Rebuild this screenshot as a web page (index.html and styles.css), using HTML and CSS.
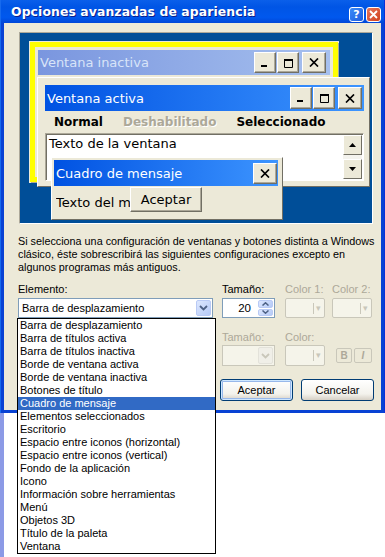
FILE: index.html
```html
<!DOCTYPE html>
<html lang="es">
<head>
    <meta charset="UTF-8">
    <title>Opciones avanzadas de apariencia</title>
    <link rel="stylesheet" href="styles.css">
</head>
<body>
    <div class="dialog">
        <div class="titlebar">
            <span class="title">Opciones avanzadas de apariencia</span>
            <span class="cap-btn help">?</span>
            <span class="cap-btn close">
                <svg width="9" height="9" viewBox="0 0 9 9"><path d="M1 1L8 8M8 1L1 8" stroke="#fff" stroke-width="1.8"/></svg>
            </span>
        </div>

        <div class="dialog-body">
            <!-- Preview of the window elements -->
            <div class="preview">
                <div class="desk">
                    <div class="win inactive">
                        <div class="win-title inactive-title">
                            <span>Ventana inactiva</span>
                            <div class="win-btns">
                                <span class="wbtn"><svg width="10" height="10" viewBox="0 0 10 10"><rect x="1" y="7" width="6" height="2"/></svg></span>
                                <span class="wbtn"><svg width="11" height="10" viewBox="0 0 11 10"><path d="M1 1.5H10M1.5 1V9.5H9.5V1" fill="none" stroke="#000" stroke-width="1"/><rect x="1" y="1" width="9" height="2"/></svg></span>
                                <span class="wbtn gap"><svg width="10" height="9" viewBox="0 0 10 9"><path d="M1 0.5L9 8.5M9 0.5L1 8.5" stroke="#000" stroke-width="1.7"/></svg></span>
                            </div>
                        </div>
                    </div>

                    <div class="win active">
                        <div class="win-title active-title">
                            <span>Ventana activa</span>
                            <div class="win-btns">
                                <span class="wbtn"><svg width="10" height="10" viewBox="0 0 10 10"><rect x="1" y="7" width="6" height="2"/></svg></span>
                                <span class="wbtn"><svg width="11" height="10" viewBox="0 0 11 10"><path d="M1 1.5H10M1.5 1V9.5H9.5V1" fill="none" stroke="#000" stroke-width="1"/><rect x="1" y="1" width="9" height="2"/></svg></span>
                                <span class="wbtn gap"><svg width="10" height="9" viewBox="0 0 10 9"><path d="M1 0.5L9 8.5M9 0.5L1 8.5" stroke="#000" stroke-width="1.7"/></svg></span>
                            </div>
                        </div>
                        <div class="menu-row">
                            <span>Normal</span>
                            <span class="disabled">Deshabilitado</span>
                            <span>Seleccionado</span>
                        </div>
                        <div class="win-text">
                            <span>Texto de la ventana</span>
                            <div class="scroll">
                                <span class="sbtn"><svg width="7" height="4" viewBox="0 0 7 4"><path d="M0 4L3.5 0L7 4Z"/></svg></span>
                                <span class="sbtn"><svg width="7" height="4" viewBox="0 0 7 4"><path d="M0 0L3.5 4L7 0Z"/></svg></span>
                            </div>
                        </div>
                    </div>

                    <div class="msgbox">
                        <div class="win-title active-title msg-title">
                            <span>Cuadro de mensaje</span>
                            <span class="wbtn msg-close"><svg width="10" height="9" viewBox="0 0 10 9"><path d="M1 0.5L9 8.5M9 0.5L1 8.5" stroke="#000" stroke-width="1.7"/></svg></span>
                        </div>
                        <div class="msg-body">
                            <span class="msg-text">Texto del mensaje</span>
                            <span class="msg-ok">Aceptar</span>
                        </div>
                    </div>
                </div>
            </div>

            <p class="note">Si selecciona una configuración de ventanas y botones distinta a Windows<br>clásico, éste sobrescribirá las siguientes configuraciones excepto en<br>algunos programas más antiguos.</p>

            <div class="fields">
                <label>Elemento:</label>
                <label>Tamaño:</label>
                <label class="off">Color 1:</label>
                <label class="off">Color 2:</label>

                <div class="combo wide">
                    <span>Barra de desplazamiento</span>
                    <span class="combo-arrow"><svg width="9" height="6" viewBox="0 0 9 6"><path d="M1 1L4.5 4.5L8 1" fill="none" stroke="#4D6185" stroke-width="1.8"/></svg></span>
                </div>
                <div class="spin">
                    <span>20</span>
                    <div class="spin-btns">
                        <span><svg width="7" height="4" viewBox="0 0 7 4"><path d="M0.5 3.5L3.5 0.8L6.5 3.5" fill="none" stroke="#4D6185" stroke-width="1.5"/></svg></span>
                        <span><svg width="7" height="4" viewBox="0 0 7 4"><path d="M0.5 0.5L3.5 3.2L6.5 0.5" fill="none" stroke="#4D6185" stroke-width="1.5"/></svg></span>
                    </div>
                </div>
                <div class="colorbox"><span class="cb-arrow">▾</span></div>
                <div class="colorbox"><span class="cb-arrow">▾</span></div>
            </div>

            <div class="fields second">
                <span></span>
                <label class="off">Tamaño:</label>
                <label class="off">Color:</label>
                <span></span>

                <span></span>
                <div class="combo off-combo">
                    <span></span>
                    <span class="combo-arrow grey"><svg width="9" height="6" viewBox="0 0 9 6"><path d="M1 1L4.5 4.5L8 1" fill="none" stroke="#C9C7BA" stroke-width="1.8"/></svg></span>
                </div>
                <div class="colorbox tall"><span class="cb-arrow">▾</span></div>
                <div class="style-btns">
                    <span class="sb bold">B</span>
                    <span class="sb ital">I</span>
                </div>
            </div>

            <div class="actions">
                <button class="xp-btn default">Aceptar</button>
                <button class="xp-btn">Cancelar</button>
            </div>

            <!-- open drop-down of the Elemento combo -->
            <ul class="listbox">
                <li>Barra de desplazamiento</li>
                <li>Barra de títulos activa</li>
                <li>Barra de títulos inactiva</li>
                <li>Borde de ventana activa</li>
                <li>Borde de ventana inactiva</li>
                <li>Botones de título</li>
                <li class="sel">Cuadro de mensaje</li>
                <li>Elementos seleccionados</li>
                <li>Escritorio</li>
                <li>Espacio entre iconos (horizontal)</li>
                <li>Espacio entre iconos (vertical)</li>
                <li>Fondo de la aplicación</li>
                <li>Icono</li>
                <li>Información sobre herramientas</li>
                <li>Menú</li>
                <li>Objetos 3D</li>
                <li>Título de la paleta</li>
                <li>Ventana</li>
            </ul>
        </div>
    </div>
    <div class="edge"></div>
</body>
</html>
```

FILE: styles.css
```css
/* Page */
body {
    margin: 0;
    width: 385px;
    height: 557px;
    background: #fff;
    font-family: "Liberation Sans", Arial, sans-serif;
    font-size: 11px;
    overflow: hidden;
}

/* Dialog frame */
.dialog {
    width: 385px;
    height: 413px;
    box-sizing: border-box;
    padding: 0 3px 3px;
    background: #0842D4;
    border-left: 1px solid #166AEE;
    border-right: 1px solid #0831D9;
    display: flex;
    flex-direction: column;
}
.titlebar {
    flex-shrink: 0;
    height: 23px;
    margin: 0 -3px;
    padding: 0 3px 0 10px;
    display: flex;
    align-items: center;
    background: linear-gradient(#0A5FEA 0%, #0055E5 30%, #0058EE 75%, #0047D8 100%);
}
.title {
    flex: 1;
    color: #fff;
    font-family: "DejaVu Sans", sans-serif;
    font-weight: bold;
    font-size: 12.4px;
    letter-spacing: 0.1px;
    text-shadow: 1px 1px #0A1F8C;
}
.cap-btn {
    width: 13px;
    height: 13px;
    margin-top: 6px;
    margin-left: 2px;
    border: 1px solid #fff;
    border-radius: 3px;
    display: flex;
    align-items: center;
    justify-content: center;
    color: #fff;
    font-family: "DejaVu Sans", sans-serif;
    font-weight: bold;
    font-size: 11px;
}
.cap-btn.help {
    background: linear-gradient(135deg, #3C8CF8, #1C5CE0);
}
.cap-btn.close {
    background: linear-gradient(135deg, #E8765A, #D0421E);
}

.dialog-body {
    position: relative;
    flex: 1;
    min-height: 0;
    background: #ECE9D8;
    padding: 9px 0 0 13px;
}

/* Preview canvas */
.preview {
    width: 354px;
    height: 192px;
    margin-left: 2px;
    box-sizing: border-box;
    border: 1px solid;
    border-color: #ACA899 #fff #fff #ACA899;
}
.desk {
    position: relative;
    height: 100%;
    background: #004E98;
    overflow: hidden;
    font-family: "DejaVu Sans", sans-serif;
    font-size: 13px;
}
.win {
    position: absolute;
    box-sizing: border-box;
    background: #ECE9D8;
}
.inactive {
    left: 10px;
    top: 9px;
    width: 308px;
    height: 140px;
    border: 5px solid #FFFF00;
    padding: 3px;
    box-shadow: 1px 1px 0 #ACA899, 0 0 0 1px #ECE9D8;
}
.active {
    left: 17px;
    top: 44px;
    width: 333px;
    height: 110px;
    padding: 7px 5px 0 7px;
    border: 1px solid;
    border-color: #fff #716F64 #716F64 #fff;
}
.win-title {
    height: 25px;
    display: flex;
    align-items: center;
    padding-left: 2px;
    color: #fff;
}
.win-title > span:first-child {
    flex: 1;
}
.inactive-title {
    background: linear-gradient(90deg, #7A96DF, #A6C0EE);
    color: #D8E4F8;
}
.active-title {
    height: 26px;
    background: linear-gradient(90deg, #0052E2, #3D95FF);
}
.win-btns {
    display: flex;
    gap: 1px;
    margin-right: 4px;
}
.active .win-btns {
    margin-right: 2px;
}
.wbtn {
    width: 22px;
    height: 21px;
    box-sizing: border-box;
    background: #ECE9D8;
    border: 1px solid;
    border-color: #fff #716F64 #716F64 #fff;
    box-shadow: inset -1px -1px #ACA899;
    display: flex;
    align-items: center;
    justify-content: center;
}
.active .wbtn {
    height: 22px;
}
.wbtn.gap {
    margin-left: 2px;
    width: 24px;
}
.menu-row {
    height: 22px;
    display: flex;
    align-items: center;
    gap: 20px;
    padding-left: 9px;
    font-weight: bold;
    font-size: 12px;
    color: #000;
}
.menu-row .disabled {
    color: #ACA899;
    text-shadow: 1px 1px #fff;
}
.win-text {
    height: 48px;
    box-sizing: border-box;
    background: #fff;
    border: 1px solid;
    border-color: #ACA899 #fff #fff #ACA899;
    box-shadow: inset 1px 1px #716F64;
    display: flex;
    padding: 2px 1px 1px 3px;
}
.win-text > span {
    flex: 1;
    line-height: 15px;
}
.scroll {
    width: 19px;
    display: flex;
    flex-direction: column;
    justify-content: space-between;
    background: #F4F3EE;
    margin-top: -1px;
}
.sbtn {
    height: 20px;
    box-sizing: border-box;
    background: #ECE9D8;
    border: 1px solid;
    border-color: #fff #716F64 #716F64 #fff;
    display: flex;
    align-items: center;
    justify-content: center;
}

/* Message box */
.msgbox {
    position: absolute;
    left: 31px;
    top: 124px;
    width: 232px;
    height: 63px;
    box-sizing: border-box;
    background: #ECE9D8;
    padding: 2px 4px 0 2px;
    border: 1px solid;
    border-color: #fff #716F64 #716F64 #fff;
}
.msg-title {
    padding-right: 1px;
}
.msg-close {
    width: 24px;
    height: 21px;
}
.msg-body {
    height: 32px;
    display: flex;
    align-items: center;
    padding-left: 2px;
}
.msg-text {
    width: 74px;
    overflow: hidden;
    white-space: nowrap;
}
.msg-ok {
    align-self: flex-start;
    margin-top: 1px;
    width: 72px;
    height: 25px;
    box-sizing: border-box;
    background: #ECE9D8;
    border: 1px solid;
    border-color: #fff #716F64 #716F64 #fff;
    box-shadow: inset -1px -1px #ACA899;
    display: flex;
    align-items: center;
    justify-content: center;
}

/* Explanation */
.note {
    margin: 11px 0 0 1px;
    line-height: 13px;
    font-size: 10.8px;
    white-space: nowrap;
    color: #000;
}

/* Element / size / colour fields */
.fields {
    display: grid;
    grid-template-columns: 204px 63px 47px 40px;
    grid-template-rows: 13px 20px;
    row-gap: 2px;
    margin-top: 9px;
    margin-left: 1px;
}
.fields.second {
    margin-top: 13px;
    grid-template-rows: 13px 21px;
    row-gap: 1px;
}
.fields label {
    line-height: 13px;
}
.fields .off {
    color: #ACA899;
}
.combo {
    box-sizing: border-box;
    border: 1px solid #7F9DB9;
    background: #fff;
    display: flex;
    align-items: center;
    padding: 0 1px 0 3px;
}
.combo.wide {
    width: 195px;
}
.combo > span:first-child {
    flex: 1;
}
.combo-arrow {
    width: 15px;
    height: 16px;
    box-sizing: border-box;
    border: 1px solid #B9CAF5;
    border-radius: 2px;
    background: linear-gradient(135deg, #DDE7FE, #B5CAF7);
    display: flex;
    align-items: center;
    justify-content: center;
}
.combo-arrow.grey {
    background: #F0EFE8;
    border-color: #E3E2DA;
    height: 17px;
}
.off-combo {
    width: 53px;
    background: #F5F4EA;
    border-color: #C9C7BA;
}
.spin {
    width: 53px;
    box-sizing: border-box;
    border: 1px solid #7F9DB9;
    background: #fff;
    display: flex;
    align-items: center;
    padding: 1px;
}
.spin > span {
    flex: 1;
    text-align: right;
    padding-right: 7px;
    font-size: 11.5px;
}
.spin-btns {
    width: 15px;
    height: 100%;
    display: flex;
    flex-direction: column;
    gap: 1px;
}
.spin-btns span {
    flex: 1;
    border: 1px solid #B9CAF5;
    border-radius: 2px;
    background: linear-gradient(135deg, #DDE7FE, #B5CAF7);
    display: flex;
    align-items: center;
    justify-content: center;
}
.colorbox {
    width: 40px;
    box-sizing: border-box;
    border: 1px solid #C9C7BA;
    border-radius: 2px;
    background: #F5F4EA;
    display: flex;
    justify-content: flex-end;
    align-items: center;
    padding-right: 3px;
}
.cb-arrow {
    border-left: 1px solid #C9C7BA;
    padding-left: 2px;
    color: #C9C7BA;
    font-size: 9px;
    line-height: 11px;
}
.style-btns {
    display: flex;
    gap: 2px;
    margin-left: 4px;
    margin-top: 3px;
    height: 15px;
}
.sb {
    width: 16px;
    box-sizing: border-box;
    border: 1px solid #C9C7BA;
    border-radius: 2px;
    display: flex;
    align-items: center;
    justify-content: center;
    color: #ACA899;
    font-weight: bold;
    font-size: 10px;
}
.sb.ital {
    width: 18px;
    font-style: italic;
}

/* OK / Cancel */
.actions {
    display: flex;
    gap: 8px;
    margin-top: 13px;
    margin-left: 203px;
}
.xp-btn {
    width: 73px;
    height: 22px;
    padding: 0;
    border: 1px solid #003C74;
    border-radius: 3px;
    background: linear-gradient(#FFFFFF, #F3F2EC 70%, #D6D0C5);
    font-family: "Liberation Sans", Arial, sans-serif;
    font-size: 11px;
    color: #000;
}
.xp-btn.default {
    box-shadow: inset 0 0 0 1px #CEE7FF, inset 0 0 0 2px #98B8EA;
}

/* Open drop-down list */
.listbox {
    position: absolute;
    left: 13px;
    top: 295px;
    width: 197px;
    margin: 0;
    padding: 0;
    list-style: none;
    border: 1px solid #000;
    background: #fff;
    z-index: 2;
}
.listbox li {
    height: 13px;
    line-height: 13px;
    padding-left: 2px;
    white-space: nowrap;
}
.listbox li.sel {
    background: #316AC5;
    color: #fff;
}

.edge {
    width: 4px;
    height: 144px;
    background: #8C9AE6;
}
```
